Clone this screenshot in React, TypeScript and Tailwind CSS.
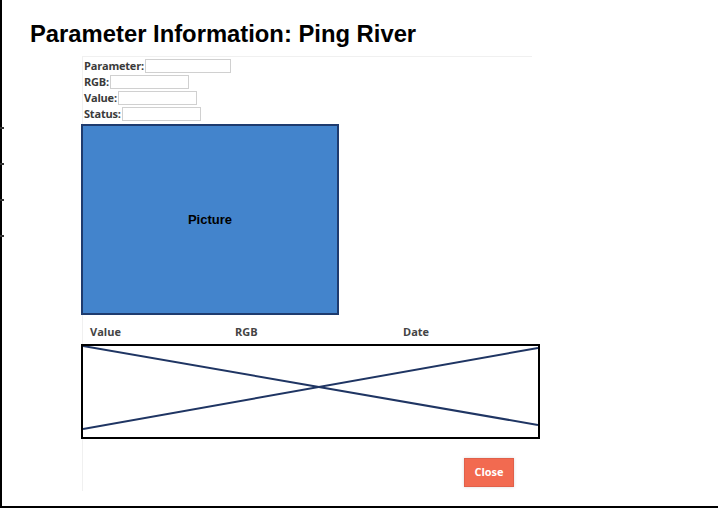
export default function App() {
  const fields = [
    { label: "Parameter:", w: "w-[86px]" },
    { label: "RGB:", w: "w-[79px]" },
    { label: "Value:", w: "w-[79px]" },
    { label: "Status:", w: "w-[79px]" },
  ];

  return (
    <div className="relative w-[718px] h-[509px] bg-white overflow-hidden font-['Liberation_Sans',Arial,sans-serif]">
      {/* left edge + ticks */}
      <div className="absolute left-0 top-0 w-[2px] h-[508px] bg-black" />
      {[127, 163, 199, 235].map((y) => (
        <div key={y} className="absolute left-0 w-[4px] h-[2px] bg-[#333]" style={{ top: y }} />
      ))}

      <h1 className="pl-[30px] pt-[20px] text-[23.8px] leading-[28px] font-bold text-black">
        Parameter Information: Ping River
      </h1>

      <div className="ml-[82px] mt-[8px] w-[450px] h-[435px] border-t border-l border-[#f0f0f0] font-['Open_Sans',sans-serif]">
        <div className="pt-[2px] pl-[1px] flex flex-col gap-[2px]">
          {fields.map((f) => (
            <div key={f.label} className="flex items-center h-[14px] text-[11px] font-bold text-[#3a3a3a] tracking-[-0.2px]">
              <span>{f.label}</span>
              <span className={`ml-[1px] h-[14px] ${f.w} border border-[#d0d0d0] bg-white`} />
            </div>
          ))}
        </div>

        <div className="-ml-[2px] mt-[3px] w-[258px] h-[191px] border-2 border-[#1e3b6e] bg-[#4384cc] flex items-center justify-center">
          <span className="text-[13px] font-bold text-black font-['Liberation_Sans',Arial,sans-serif]">Picture</span>
        </div>

        <div className="flex mt-[9px] h-[16px] items-center text-[11px] font-bold text-[#444]">
          <span className="ml-[7px] w-[145px]">Value</span>
          <span className="w-[168px]">RGB</span>
          <span>Date</span>
        </div>

        <div className="-ml-[2px] mt-[4px] w-[459px] h-[95px] border-2 border-black">
          <svg width="455" height="91" viewBox="0 0 455 91" className="block">
            <line x1="0" y1="0" x2="455" y2="79" stroke="#1f3563" strokeWidth="2" />
            <line x1="0" y1="83" x2="455" y2="2" stroke="#1f3563" strokeWidth="2" />
          </svg>
        </div>

        <div className="flex justify-end mt-[19px] pr-[18px]">
          <button className="w-[50px] h-[29px] bg-[#f26a50] text-white text-[11px] font-bold border border-[#e0604a] shadow-[0_0_3px_rgba(0,0,0,0.15)]">
            Close
          </button>
        </div>
      </div>

      <div className="absolute left-0 top-[506px] w-[718px] h-[2px] bg-black" />
    </div>
  );
}
